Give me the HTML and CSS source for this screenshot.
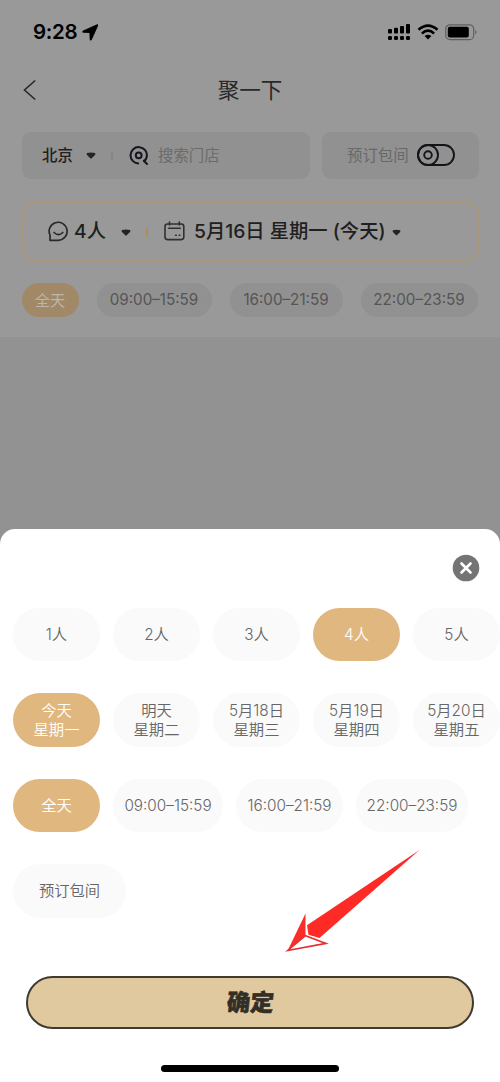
FILE: index.html
```html
<!DOCTYPE html>
<html lang="zh-CN">
<head>
<meta charset="utf-8">
<meta name="viewport" content="width=device-width, initial-scale=1">
<title>聚一下</title>
<link rel="stylesheet" href="styles.css">
</head>
<body>
<div class="screen">
  <div class="booking">
    <div class="status">
      <span class="clock">9:28</span>
      <svg class="locate" width="17" height="17" viewBox="0 0 17 17"><path d="M14.600.5 1.200 6.500C-.1 7.200.1 8.700 1.500 8.800l5.900.3.300 6.100c.1 1.500 1.600 1.600 2.200.3L16 2C16.500.8 15.700 0 14.600.5Z"/></svg>
      <svg class="signal" width="23" height="17" viewBox="0 0 23 17"><rect x="0" y="5" width="4" height="4.500" rx="1"/><rect x="6" y="3.700" width="4" height="5.800" rx="1"/><rect x="12" y="2" width="4" height="7.500" rx="1"/><rect x="18" y="0" width="4" height="9.500" rx="1"/><rect x="0" y="12" width="4" height="4" rx="1.200"/><rect x="6" y="12" width="4" height="4" rx="1.200"/><rect x="12" y="12" width="4" height="4" rx="1.200"/><rect x="18" y="12" width="4" height="4" rx="1.200"/></svg>
      <svg class="wifi" width="22" height="16" viewBox="0 0 22 16"><g fill="none" stroke="#000" stroke-width="2.700"><path d="M1.500 5.700Q11-2.600 20.500 5.700"/><path d="M4.900 9.400Q11 4 17.100 9.400"/></g><path d="M7.600 12.100Q11 9.300 14.400 12.100L11 15.500Z"/></svg>
      <svg class="battery" width="33" height="17" viewBox="0 0 33 17"><rect x=".7" y=".8" width="28" height="14.800" rx="4.200" fill="none" stroke="#606060" stroke-width="1.200"/><rect x="2.800" y="2.800" width="21" height="10.800" rx="2"/><path d="M30.300 5.800q2.600 2.300 0 4.800Z" fill="#606060"/></svg>
    </div>
    <div class="nav">
      <svg class="back" width="14" height="22" viewBox="0 0 14 22"><path d="M12.200 1.500 1.500 11l10.700 9.500" fill="none" stroke="#292929" stroke-width="1.600"/></svg>
      <h1 class="title">聚一下</h1>
    </div>
    <div class="search-row">
      <div class="search">
        <span class="city">北京</span>
        <svg class="caret" width="10" height="7" viewBox="0 0 10 7"><path d="M1 1Q5-.1 9 1 10 2 8.500 3.500L5.700 6.300Q5 7 4.300 6.300L1.500 3.500Q0 2 1 1Z"/></svg>
        <i class="divider"></i>
        <svg class="lens" width="20" height="20" viewBox="0 0 20 20"><g fill="none" stroke="#161620" stroke-width="2"><path d="M10 17.500A8.200 8.200 0 1 1 17.800 10.500C17.500 12.500 16.500 14 15.200 15.300"/><circle cx="9.700" cy="9.300" r="2.900"/><path d="m14.800 14.800 3.200 3.200" stroke-linecap="round"/></g></svg>
        <span class="hint">搜索门店</span>
      </div>
      <div class="private">
        <span>预订包间</span>
        <svg width="38" height="22" viewBox="0 0 38 22"><g fill="none" stroke="#151519" stroke-width="1.900"><rect x="1" y="1" width="36" height="20" rx="10"/><circle cx="11" cy="11" r="10"/><circle cx="11" cy="11" r="3.800"/></g></svg>
      </div>
    </div>
    <div class="choice">
      <svg width="21" height="21" viewBox="0 0 21 21"><g fill="none" stroke="#292929" stroke-width="1.700" stroke-linecap="round" stroke-linejoin="round"><path d="M2 19.300V14.200A9 9 0 1 1 10.300 19.300Z"/><path d="M6.100 11.500q4.400 4.300 8.700 0"/></g></svg>
      <span class="people">4人</span>
      <svg class="caret people-caret" width="10" height="7" viewBox="0 0 10 7"><path d="M1 1Q5-.1 9 1 10 2 8.500 3.500L5.700 6.300Q5 7 4.300 6.300L1.500 3.500Q0 2 1 1Z"/></svg>
      <i class="divider gold"></i>
      <svg class="calendar" width="21" height="20" viewBox="0 0 21 20"><g fill="none" stroke="#303030" stroke-width="1.600" stroke-linecap="round"><rect x="1" y="3" width="18.800" height="15.600" rx="2.500"/><path d="M5.500 1v3M15.300 1v3M4.700 7.300h11.500M11.600 14.300h.7M15.200 14.300h.7"/></g></svg>
      <span class="date">5月16日 星期一 (今天)</span>
      <svg class="caret" width="9" height="7" viewBox="0 0 10 7"><path d="M1 1Q5-.1 9 1 10 2 8.500 3.500L5.700 6.300Q5 7 4.300 6.300L1.500 3.500Q0 2 1 1Z"/></svg>
    </div>
    <div class="chips">
      <span class="chip picked">全天</span>
      <span class="chip">09:00–15:59</span>
      <span class="chip">16:00–21:59</span>
      <span class="chip">22:00–23:59</span>
    </div>
  </div>
  <div class="sheet">
    <svg class="close" width="28" height="28" viewBox="0 0 28 28"><circle cx="14" cy="14" r="13.300" fill="#747474"/><path d="m9.500 9.500 9 9m0-9-9 9" stroke="#fff" stroke-width="2.600" stroke-linecap="round"/></svg>
    <div class="options">
      <div class="row"><span class="pill">1人</span><span class="pill">2人</span><span class="pill">3人</span><span class="pill picked">4人</span><span class="pill">5人</span></div>
      <div class="row"><span class="pill picked">今天<br>星期一</span><span class="pill">明天<br>星期二</span><span class="pill">5月18日<br>星期三</span><span class="pill">5月19日<br>星期四</span><span class="pill">5月20日<br>星期五</span></div>
      <div class="row"><span class="pill picked">全天</span><span class="pill early">09:00–15:59</span><span class="pill middle">16:00–21:59</span><span class="pill late">22:00–23:59</span></div>
      <div class="row"><span class="pill room">预订包间</span></div>
    </div>
    <div class="confirm"><span>确定</span></div>
    <div class="home"></div>
    <svg class="pointer" width="136" height="106" viewBox="0 0 136 106"><path fill="#fe2a26" d="M134.500 2 22 77.200 23.500 86.700 34.500 90Z"/><path fill="#fa2d29" d="m20.500 65.500-17.800 37 17.800-14.800Z"/><path d="m2.700 102.500 38.200-7.100-20.400-7.700Z" fill="#fff" stroke="#e72f30" stroke-width="1.600"/></svg>
  </div>
</div>
</body>
</html>
```
FILE: styles.css
```css
* { box-sizing: border-box; }
body {
  margin: 0;
  font-family: Inter, "Noto Sans CJK SC", sans-serif;
}
svg { display: block; flex: none; }
.screen {
  width: 500px;
  height: 1082px;
  overflow: hidden;
  background: #929292;
}
.booking {
  height: 337px;
  margin-bottom: 192px;
  padding: 0 21px 0 22px;
  background: #999;
}
.status {
  height: 64px;
  display: flex;
  align-items: center;
  padding-left: 11px;
}
.clock { width: 48px; padding-bottom: 1px; font-size: 20.5px; font-weight: 600; letter-spacing: -.3px; white-space: nowrap; }
.locate { margin-left: 1px; }
.signal { margin-left: auto; }
.wifi { margin-left: 6px; }
.battery { margin: 0 1px 0 6px; }
.nav {
  height: 52px;
  display: flex;
  align-items: center;
  margin-bottom: 16px;
}
.back { margin-left: 1px; }
.title {
  flex: 1;
  margin: 0 16px 0 0;
  padding-bottom: 4px;
  color: #292929;
  font-size: 21.5px;
  font-weight: 400;
  text-align: center;
}
.search-row { display: flex; gap: 12px; height: 47px; }
.search, .private {
  display: flex;
  align-items: center;
  border-radius: 9px;
  background: #919191;
  font-size: 15.400px;
  white-space: nowrap;
}
.search span, .private span { padding-bottom: 3px; }
.search { width: 288px; padding-left: 20px; }
.city { color: #202020; font-weight: 500; width: 44px; }
.caret { fill: #242424; }
.divider { width: 2px; height: 10px; background: #878787; margin-left: 15px; }
.lens { margin-left: 16px; }
.hint { margin-left: 9px; color: #6b6b6b; }
.private { width: 157px; justify-content: space-between; padding: 0 25px; color: #686868; }
.private svg { margin: -2px -1px 0 0; }
.choice {
  height: 61px;
  margin-top: 22px;
  padding-left: 24px;
  border: 2px solid #aa9678;
  border-radius: 15px;
  display: flex;
  align-items: center;
  color: #202020;
  font-size: 19.300px;
  font-weight: 500;
  white-space: nowrap;
}
.choice span { padding-bottom: 3px; }
.people { width: 39px; margin-left: 5px; }
.people-caret { margin-left: 8px; }
.gold { background: #ac8f5e; }
.calendar { margin: -1px 0 0 16px; }
.date { width: 193px; margin-left: 9px; }
.choice > .caret { margin-top: 2px; }
.date + .caret { margin-left: 5px; }
.chips { display: flex; gap: 18px; margin-top: 21px; }
.chip {
  height: 34px;
  width: 115px;
  padding: 0 1px 1px 0;
  display: grid;
  place-items: center;
  border-radius: 17px;
  background: #919191;
  color: #555;
  font-size: 15.200px;
}
.chip.picked { width: 57px; padding-bottom: 3px; background: #a18867; color: #bdb6ac; }
.chip:nth-child(3) { width: 113px; }
.chip:nth-child(4) { width: 117px; }
.sheet {
  position: relative;
  height: 553px;
  padding: 25px 0 0 13px;
  border-radius: 15px 15px 0 0;
  background: #fff;
}
.close { margin-left: 439px; }
.options { display: grid; gap: 32px; margin-top: 26px; }
.row { display: flex; gap: 13px; height: 53.4px; }
.pill {
  width: 87px;
  flex: none;
  padding-top: 1px;
  display: grid;
  place-content: center;
  border-radius: 27px;
  background: #fafafa;
  color: #666;
  font-size: 15.300px;
  font-weight: 350;
  line-height: 18.500px;
  text-align: center;
  white-space: nowrap;
}
.pill.picked { background: #e1b780; color: #fff; }
.early { width: 110px; }
.middle { width: 107px; }
.late { width: 112px; }
.room { width: 113px; }
.confirm {
  width: 448px;
  height: 53px;
  margin: 58px 0 0 13px;
  padding-bottom: 3px;
  display: grid;
  place-items: center;
  border: 2px solid #403a31;
  border-radius: 27px;
  background: #e0c99f;
  color: #342f26;
  font-size: 23.500px;
  font-weight: 900;
}
.confirm span { transform: skewX(-6deg); -webkit-text-stroke: .5px #342f26; }
.home {
  width: 178px;
  height: 7px;
  margin: 36px 0 0 148px;
  border-radius: 4px;
  background: #000;
}
.pointer { position: absolute; left: 285px; top: 319px; }
```
